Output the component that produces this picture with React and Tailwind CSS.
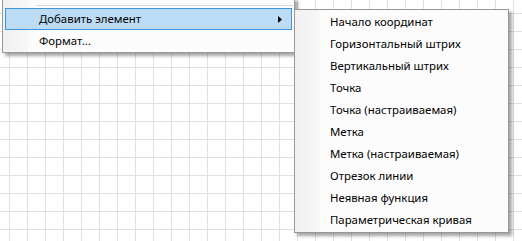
import React from 'react';

const subItems = [
  'Начало координат',
  'Горизонтальный штрих',
  'Вертикальный штрих',
  'Точка',
  'Точка (настраиваемая)',
  'Метка',
  'Метка (настраиваемая)',
  'Отрезок линии',
  'Неявная функция',
  'Параметрическая кривая',
];

const App = () => {
  return (
    <div
      className="relative w-[522px] h-[241px] overflow-hidden bg-white bg-[linear-gradient(to_right,#e0e0e0_1px,transparent_1px),linear-gradient(to_bottom,#e0e0e0_1px,transparent_1px)] bg-[size:18px_18px] bg-[position:9px_13px] text-[11.4px] text-black"
      style={{ fontFamily: '"Noto Sans", "Liberation Sans", sans-serif' }}
    >
      {/* Context menu */}
      <div className="absolute left-[2px] top-[-2px] w-[293px] border border-[#979797] bg-[#fcfcfc] shadow-[3px_3px_3px_rgba(0,0,0,0.35)] flex">
        <div className="w-[25px] shrink-0 bg-[linear-gradient(to_right,#f1f1f1,#f7f7f7)]" />
        <div className="flex-1 flex flex-col pt-[6px] -ml-[25px]">
          <div className="h-px bg-[#d7d7d7] ml-[33px] mr-[1px]" />
          <div className="mt-[2px] mx-[2px] h-[22px] border border-[#3f94de] bg-[#bcdcf6] flex items-center justify-between pl-[33px] pr-[8px]">
            <span>Добавить элемент</span>
            <svg width="4" height="7" viewBox="0 0 4 7" className="mr-[1px]">
              <polygon points="0,0 4,3.5 0,7" fill="#000" />
            </svg>
          </div>
          <div className="h-[22px] flex items-center pl-[36px]">Формат...</div>
        </div>
      </div>

      {/* Submenu */}
      <div className="absolute left-[294px] top-[9px] w-[215px] border border-[#979797] bg-[#fcfcfc] shadow-[3px_3px_3px_rgba(0,0,0,0.35)] flex">
        <div className="w-[25px] shrink-0 bg-[linear-gradient(to_right,#f1f1f1,#f7f7f7)]" />
        <div className="flex-1 flex flex-col py-[1px] -ml-[25px]">
          {subItems.map((item) => (
            <div key={item} className="h-[22px] flex items-center pl-[35px]">
              {item}
            </div>
          ))}
        </div>
      </div>
    </div>
  );
};

export default App;
